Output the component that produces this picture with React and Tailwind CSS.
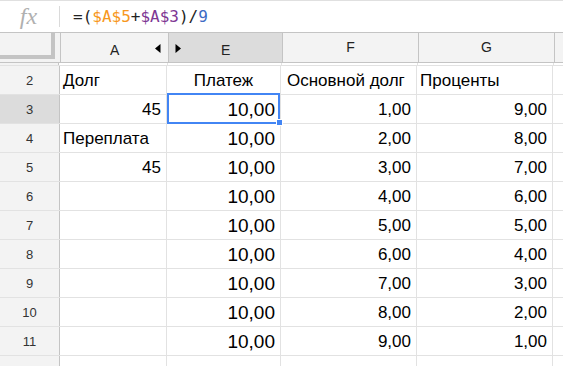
import React from "react";

const W = { rh: "w-[60px]", a: "w-[108px]", e: "w-[114px]", f: "w-[136px]", g: "w-[136px]" };

function LeftArrow() {
  return (
    <svg width="6" height="9" viewBox="0 0 6 9" className="block">
      <path d="M5.5 0 L0 4.5 L5.5 9 Z" fill="#000" />
    </svg>
  );
}
function RightArrow() {
  return (
    <svg width="6" height="9" viewBox="0 0 6 9" className="block">
      <path d="M0.5 0 L6 4.5 L0.5 9 Z" fill="#000" />
    </svg>
  );
}

const rows = [
  { n: 2, a: ["Долг", "l"], e: ["Платеж", "c"], f: ["Основной долг", "l"], g: ["Проценты", "l"] },
  { n: 3, a: ["45", "r"], e: ["10,00", "r"], f: ["1,00", "r"], g: ["9,00", "r"], sel: true },
  { n: 4, a: ["Переплата", "l"], e: ["10,00", "r"], f: ["2,00", "r"], g: ["8,00", "r"] },
  { n: 5, a: ["45", "r"], e: ["10,00", "r"], f: ["3,00", "r"], g: ["7,00", "r"] },
  { n: 6, a: ["", "r"], e: ["10,00", "r"], f: ["4,00", "r"], g: ["6,00", "r"] },
  { n: 7, a: ["", "r"], e: ["10,00", "r"], f: ["5,00", "r"], g: ["5,00", "r"] },
  { n: 8, a: ["", "r"], e: ["10,00", "r"], f: ["6,00", "r"], g: ["4,00", "r"] },
  { n: 9, a: ["", "r"], e: ["10,00", "r"], f: ["7,00", "r"], g: ["3,00", "r"] },
  { n: 10, a: ["", "r"], e: ["10,00", "r"], f: ["8,00", "r"], g: ["2,00", "r"] },
  { n: 11, a: ["", "r"], e: ["10,00", "r"], f: ["9,00", "r"], g: ["1,00", "r"] },
];

function Cell({ w, v, big, pl = "pl-[4px]" }) {
  const [text, al] = v;
  const just = al === "r" ? "justify-end pr-[5px]" : al === "c" ? "justify-center" : `justify-start ${pl}`;
  const size = big && al === "r" ? "text-[19px]" : "text-[17px]";
  return (
    <div className={`${w} shrink-0 h-full flex items-center pt-[2px] border-r border-[#e2e2e2] ${just} ${size} text-black whitespace-nowrap`}>
      {text}
    </div>
  );
}

export default function App() {
  return (
    <div className="w-[563px] h-[366px] overflow-hidden bg-white relative" style={{ fontFamily: '"Liberation Sans", Arial, sans-serif' }}>
      {/* formula bar */}
      <div className="h-[32px] border-t border-[#e0e0e0] flex items-center">
        <div className="w-[59px] flex items-center justify-center pb-[1px] pr-[2px]">
          <span className="italic text-[24px] text-[#b0b0b0] leading-none" style={{ fontFamily: '"Liberation Serif", serif' }}>fx</span>
        </div>
        <div className="w-px h-[21px] bg-[#dadada]" />
        <div className="pl-[13px] text-[16px] text-[#222]" style={{ fontFamily: '"DejaVu Sans Mono", "Liberation Mono", monospace' }}>
          <span>=(</span>
          <span className="text-[#f7981d]">$A$5</span>
          <span>+</span>
          <span className="text-[#7e3794]">$A$3</span>
          <span>)/</span>
          <span className="text-[#3d6cc4]">9</span>
        </div>
      </div>

      {/* column header */}
      <div className="h-[31px] flex border-t border-b border-[#c4c4c4] bg-[#f3f3f3] text-[14px] text-[#222]">
        <div className={`${W.rh} shrink-0 h-full flex`}>
          <div className="w-[55px] h-[26px] border-r-[4px] border-b-[4px] border-[#c4c4c4] bg-[#f3f3f3]" />
        </div>
        <div className={`${W.a} shrink-0 h-full border-l border-[#c4c4c4] flex items-center relative`}>
          <span className="absolute left-[49px] top-[7px]">A</span>
          <span className="absolute right-[7px] top-[11px]"><LeftArrow /></span>
        </div>
        <div className={`${W.e} shrink-0 h-full border-l border-[#c4c4c4] bg-[#dcdcdc] relative`}>
          <span className="absolute left-[6px] top-[11px]"><RightArrow /></span>
          <span className="absolute left-[52px] top-[7px]">E</span>
        </div>
        <div className={`${W.f} shrink-0 h-full border-l border-[#c4c4c4] flex items-center justify-center`}>F</div>
        <div className={`${W.g} shrink-0 h-full border-l border-[#c4c4c4] flex items-center justify-center`}>G</div>
        <div className="flex-1 h-full border-l border-[#c4c4c4]" />
      </div>

      {/* row 1 slice */}
      <div className="h-[3px] flex border-b border-[#e2e2e2] overflow-hidden">
        <div className="w-[59px] shrink-0 h-full bg-[#f3f3f3] border-r border-[#c4c4c4]" />
        <div className="w-px" />
        <div className={`${W.a} shrink-0 border-r border-[#e2e2e2]`} />
        <div className={`${W.e} shrink-0 border-r border-[#e2e2e2]`} />
        <div className={`${W.f} shrink-0 border-r border-[#e2e2e2]`} />
        <div className={`${W.g} shrink-0 border-r border-[#e2e2e2]`} />
      </div>

      {rows.map((r) => (
        <div key={r.n} className="h-[29px] flex border-b border-[#e2e2e2]">
          <div className={`w-[60px] shrink-0 h-full flex items-center justify-center pt-[2px] text-[13px] text-[#333] border-r border-[#c4c4c4] ${r.sel ? "bg-[#dcdcdc]" : "bg-[#f3f3f3]"}`}>
            {r.n}
          </div>
          <Cell w="w-[107px]" v={r.a} pl="pl-[3px]" />
          <Cell w={W.e} v={r.e} big />
          <Cell w={W.f} v={r.f} pl="pl-[6px]" />
          <Cell w={W.g} v={r.g} pl="pl-[3px]" />
          <div className="flex-1" />
        </div>
      ))}

      {/* row 12 partial */}
      <div className="h-[12px] flex">
        <div className="w-[60px] shrink-0 h-full bg-[#f3f3f3] border-r border-[#c4c4c4] flex justify-center pt-[8px] text-[13px] text-[#333] leading-none overflow-hidden">12</div>
        <div className="w-[107px] shrink-0 border-r border-[#e2e2e2]" />
        <div className={`${W.e} shrink-0 border-r border-[#e2e2e2]`} />
        <div className={`${W.f} shrink-0 border-r border-[#e2e2e2]`} />
        <div className={`${W.g} shrink-0 border-r border-[#e2e2e2]`} />
      </div>

      {/* selection overlay */}
      <div className="absolute left-[167px] top-[93px] w-[113px] h-[31px] border-2 border-[#4285f4] pointer-events-none" />
      <div className="absolute left-[276px] top-[119px] w-[7px] h-[7px] bg-[#4285f4] border border-white pointer-events-none" />
    </div>
  );
}
